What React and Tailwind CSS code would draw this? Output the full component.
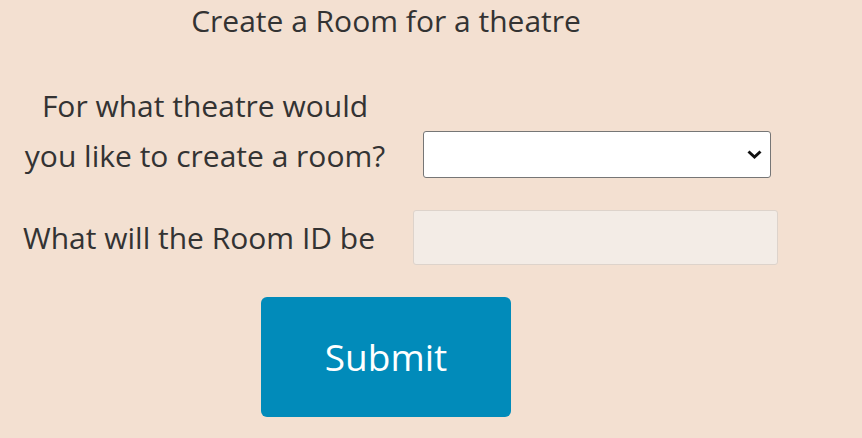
export default function App() {
  return (
    <div
      className="w-[862px] h-[438px] overflow-hidden bg-[#f3e0d1] text-[#333333]"
      style={{ fontFamily: '"Open Sans", sans-serif' }}
    >
      <div className="w-[772px]">
        <h1 className="text-center text-[30px] leading-[40px] pt-[1px]">Create a Room for a theatre</h1>

        <div className="flex items-start mt-[40px]">
          <label className="w-[364px] ml-[23px] text-center text-[30px] leading-[50px]">
            For what theatre would you like to create a room?
          </label>
          <div className="relative ml-[36px] mt-[50px] shrink-0">
            <select className="w-[348px] h-[47px] bg-white border border-[#767676] rounded-[3px] appearance-none px-2 text-[20px]">
              <option></option>
            </select>
            <svg
              className="absolute right-[8px] top-[18px] pointer-events-none"
              width="17"
              height="11"
              viewBox="0 0 17 11"
            >
              <path d="M2.5 2.5 L8.5 8 L14.5 2.5" fill="none" stroke="#111" strokeWidth="3" />
            </svg>
          </div>
        </div>

        <div className="flex items-center mt-[29px]">
          <label className="ml-[23px] whitespace-nowrap text-[30px] leading-[40px]">What will the Room ID be</label>
          <input
            disabled
            className="ml-[38px] w-[365px] h-[55px] shrink-0 bg-[#f3ece6] border border-[#ddd3cb] rounded-[3px]"
          />
        </div>

        <div className="flex justify-center mt-[32px]">
          <button className="w-[250px] h-[120px] bg-[#018bba] rounded-[6px] text-white text-[37px]">
            Submit
          </button>
        </div>
      </div>
    </div>
  )
}
